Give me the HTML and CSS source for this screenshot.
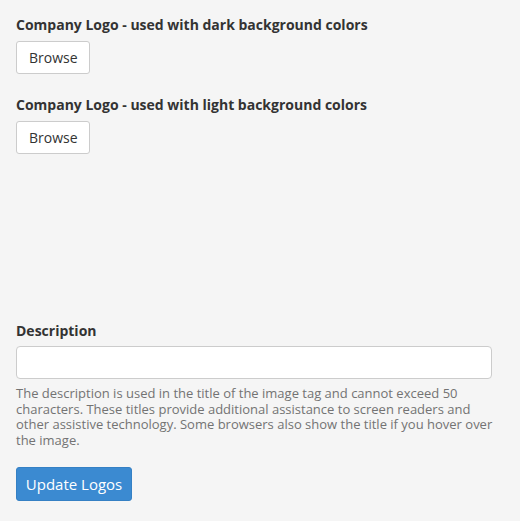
FILE: index.html
```html
<!DOCTYPE html>
<html>
<head>
<meta charset="utf-8">
<link rel="stylesheet" href="styles.css">
</head>
<body>
<form class="form">
  <div class="group">
    <label class="label">Company Logo - used with dark background colors</label>
    <button type="button" class="btn">Browse</button>
  </div>
  <div class="group">
    <label class="label">Company Logo - used with light background colors</label>
    <button type="button" class="btn">Browse</button>
  </div>
  <div class="spacer"></div>
  <div class="group desc">
    <label class="label">Description</label>
    <input class="input" type="text">
    <p class="help">The description is used in the title of the image tag and cannot exceed 50 characters. These titles provide additional assistance to screen readers and other assistive technology. Some browsers also show the title if you hover over the image.</p>
  </div>
  <button type="button" class="btn btn-primary">Update Logos</button>
</form>
</body>
</html>
```
FILE: styles.css
```css
html, body {
  margin: 0;
  padding: 0;
  background: #f5f5f5;
}
body {
  font-family: "Open Sans", "Liberation Sans", sans-serif;
  color: #333;
}
.form {
  padding: 15px 16px;
  display: flex;
  flex-direction: column;
  align-items: flex-start;
}
.group {
  display: flex;
  flex-direction: column;
  align-items: flex-start;
  margin-bottom: 21px;
}
.label {
  font-size: 14px;
  font-weight: 700;
  line-height: 20px;
  color: #333;
  margin-bottom: 6px;
}
.btn {
  font-family: inherit;
  font-size: 14px;
  line-height: 20px;
  height: 33px;
  padding: 0 12px;
  border: 1px solid #ccc;
  border-radius: 3px;
  background: #fff;
  color: #333;
  width: 74px;
  white-space: nowrap;
}
.spacer {
  height: 146px;
}
.desc {
  align-self: stretch;
  margin-bottom: 19px;
}
.desc .label {
  margin-bottom: 5px;
}
.input {
  box-sizing: border-box;
  width: 476px;
  height: 33px;
  border: 1px solid #ccc;
  border-radius: 4px;
  background: #fff;
  margin: 0;
}
.help {
  margin: 7px 0 0;
  font-size: 13px;
  line-height: 15.6px;
  color: #737373;
  width: 484px;
}
.btn-primary {
  width: 116px;
  height: 34px;
  padding: 0;
  font-size: 15px;
  background: #3b8ad1;
  border-color: #3580c4;
  color: #fff;
}
```
